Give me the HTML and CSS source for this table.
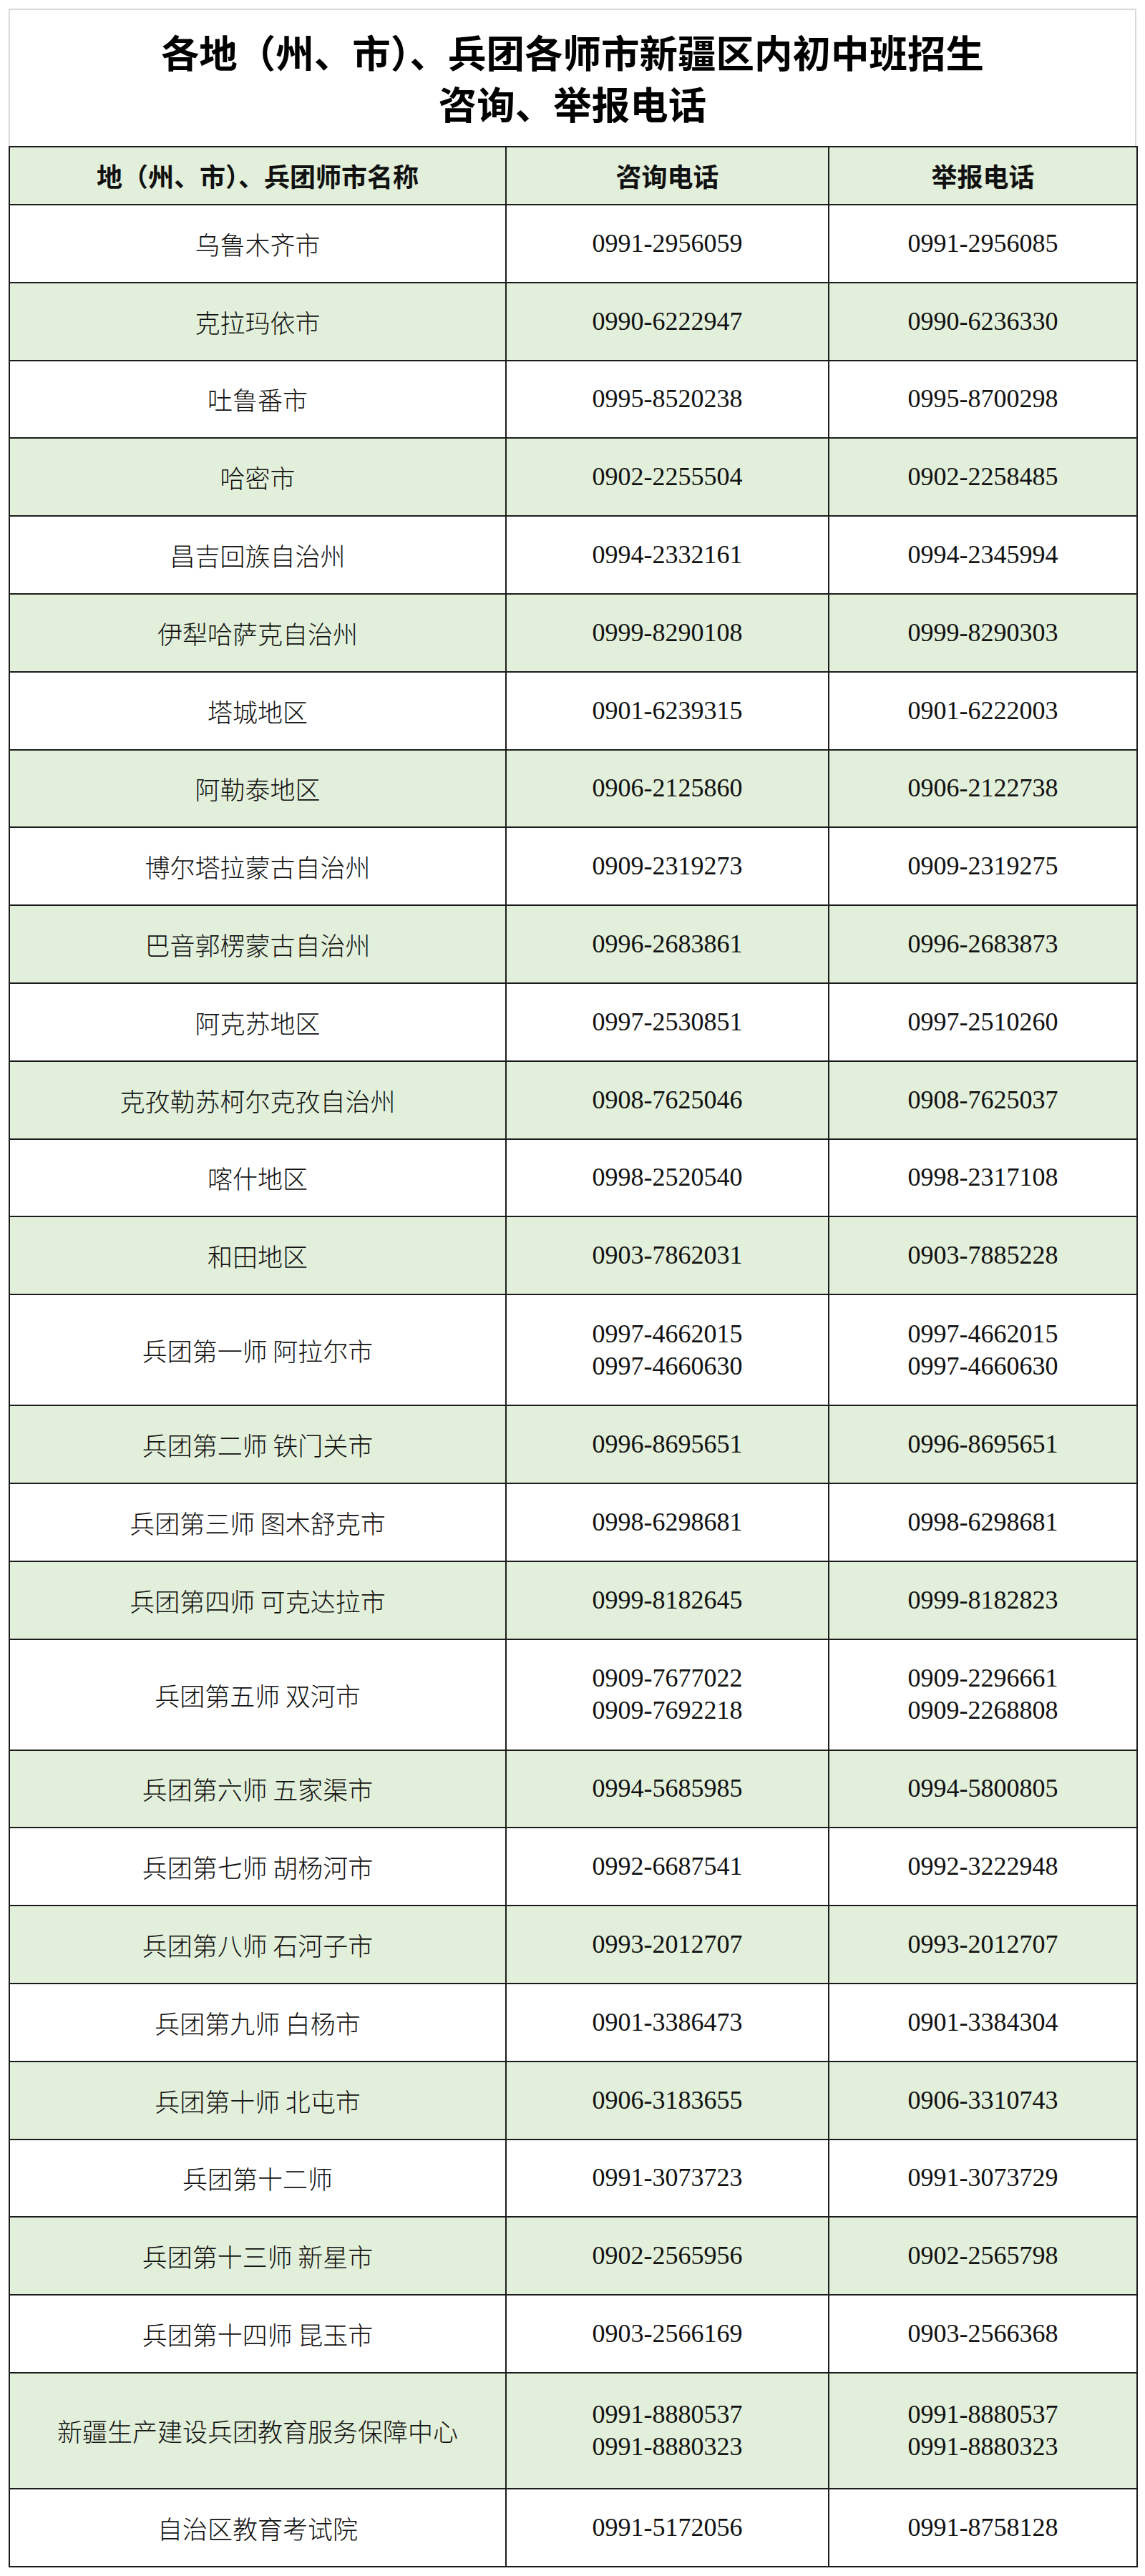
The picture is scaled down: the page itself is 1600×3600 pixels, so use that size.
FILE: index.html
```html
<!DOCTYPE html>
<html lang="zh-CN">
<head>
<meta charset="utf-8">
<title>新疆区内初中班招生咨询、举报电话</title>
<link rel="stylesheet" href="styles.css">
</head>
<body>
<div class="sheet">
  <div class="title">
    <div class="title-line">各地（州、市）、兵团各师市新疆区内初中班招生</div>
    <div class="title-line">咨询、举报电话</div>
  </div>
  <table class="phones">
    <colgroup>
      <col class="c-name">
      <col class="c-ask">
      <col class="c-report">
    </colgroup>
    <thead>
      <tr class="head"><th>地（州、市）、兵团师市名称</th><th>咨询电话</th><th>举报电话</th></tr>
    </thead>
    <tbody>
      <tr><td>乌鲁木齐市</td><td class="num">0991-2956059</td><td class="num">0991-2956085</td></tr>
      <tr class="alt"><td>克拉玛依市</td><td class="num">0990-6222947</td><td class="num">0990-6236330</td></tr>
      <tr><td>吐鲁番市</td><td class="num">0995-8520238</td><td class="num">0995-8700298</td></tr>
      <tr class="alt"><td>哈密市</td><td class="num">0902-2255504</td><td class="num">0902-2258485</td></tr>
      <tr><td>昌吉回族自治州</td><td class="num">0994-2332161</td><td class="num">0994-2345994</td></tr>
      <tr class="alt"><td>伊犁哈萨克自治州</td><td class="num">0999-8290108</td><td class="num">0999-8290303</td></tr>
      <tr><td>塔城地区</td><td class="num">0901-6239315</td><td class="num">0901-6222003</td></tr>
      <tr class="alt"><td>阿勒泰地区</td><td class="num">0906-2125860</td><td class="num">0906-2122738</td></tr>
      <tr><td>博尔塔拉蒙古自治州</td><td class="num">0909-2319273</td><td class="num">0909-2319275</td></tr>
      <tr class="alt"><td>巴音郭楞蒙古自治州</td><td class="num">0996-2683861</td><td class="num">0996-2683873</td></tr>
      <tr><td>阿克苏地区</td><td class="num">0997-2530851</td><td class="num">0997-2510260</td></tr>
      <tr class="alt"><td>克孜勒苏柯尔克孜自治州</td><td class="num">0908-7625046</td><td class="num">0908-7625037</td></tr>
      <tr><td>喀什地区</td><td class="num">0998-2520540</td><td class="num">0998-2317108</td></tr>
      <tr class="alt"><td>和田地区</td><td class="num">0903-7862031</td><td class="num">0903-7885228</td></tr>
      <tr class="double"><td>兵团第一师 阿拉尔市</td><td class="num">0997-4662015<br>0997-4660630</td><td class="num">0997-4662015<br>0997-4660630</td></tr>
      <tr class="alt"><td>兵团第二师 铁门关市</td><td class="num">0996-8695651</td><td class="num">0996-8695651</td></tr>
      <tr><td>兵团第三师 图木舒克市</td><td class="num">0998-6298681</td><td class="num">0998-6298681</td></tr>
      <tr class="alt"><td>兵团第四师 可克达拉市</td><td class="num">0999-8182645</td><td class="num">0999-8182823</td></tr>
      <tr class="double"><td>兵团第五师 双河市</td><td class="num">0909-7677022<br>0909-7692218</td><td class="num">0909-2296661<br>0909-2268808</td></tr>
      <tr class="alt"><td>兵团第六师 五家渠市</td><td class="num">0994-5685985</td><td class="num">0994-5800805</td></tr>
      <tr><td>兵团第七师 胡杨河市</td><td class="num">0992-6687541</td><td class="num">0992-3222948</td></tr>
      <tr class="alt"><td>兵团第八师 石河子市</td><td class="num">0993-2012707</td><td class="num">0993-2012707</td></tr>
      <tr><td>兵团第九师 白杨市</td><td class="num">0901-3386473</td><td class="num">0901-3384304</td></tr>
      <tr class="alt"><td>兵团第十师 北屯市</td><td class="num">0906-3183655</td><td class="num">0906-3310743</td></tr>
      <tr><td>兵团第十二师</td><td class="num">0991-3073723</td><td class="num">0991-3073729</td></tr>
      <tr class="alt"><td>兵团第十三师 新星市</td><td class="num">0902-2565956</td><td class="num">0902-2565798</td></tr>
      <tr><td>兵团第十四师 昆玉市</td><td class="num">0903-2566169</td><td class="num">0903-2566368</td></tr>
      <tr class="alt double tall"><td>新疆生产建设兵团教育服务保障中心</td><td class="num">0991-8880537<br>0991-8880323</td><td class="num">0991-8880537<br>0991-8880323</td></tr>
      <tr><td>自治区教育考试院</td><td class="num">0991-5172056</td><td class="num">0991-8758128</td></tr>
    </tbody>
  </table>
</div>
</body>
</html>
```

FILE: styles.css
```css
html, body {
  margin: 0;
  padding: 0;
  background: #ffffff;
}

body {
  font-family: "Liberation Serif", "Noto Sans CJK SC", serif;
  color: #111111;
}

.sheet {
  width: 1576px;
  margin: 12px 0 0 12px;
}

.title {
  box-sizing: border-box;
  height: 192px;
  border: 2px solid #d9d9d9;
  border-bottom: none;
  padding-top: 22px;
  text-align: center;
  font-family: "Noto Sans CJK SC", sans-serif;
  font-weight: 700;
  font-size: 53.5px;
  color: #000000;
}

.title-line {
  line-height: 72px;
  height: 72px;
}

.phones {
  width: 1576px;
  border-collapse: collapse;
  table-layout: fixed;
}

.c-name { width: 694px; }
.c-ask { width: 451px; }
.c-report { width: 431px; }

.phones th,
.phones td {
  border: 2px solid #1c1c1c;
  padding: 0;
  text-align: center;
  vertical-align: middle;
  font-family: "Noto Sans CJK SC", sans-serif;
  font-weight: 300;
  font-size: 35px;
  line-height: 45px;
  color: #111111;
}

.phones th {
  font-weight: 700;
  font-size: 36px;
  background: #e2efda;
}

.phones td.num {
  font-family: "Liberation Serif", serif;
  font-weight: 400;
  font-size: 36px;
}

.phones tr.head { height: 81px; }
.phones tbody tr { height: 108.8px; }
.phones tbody tr.double { height: 155px; }
.phones tbody tr.tall { height: 162px; }

.phones tr.alt td { background: #e2efda; }
```
